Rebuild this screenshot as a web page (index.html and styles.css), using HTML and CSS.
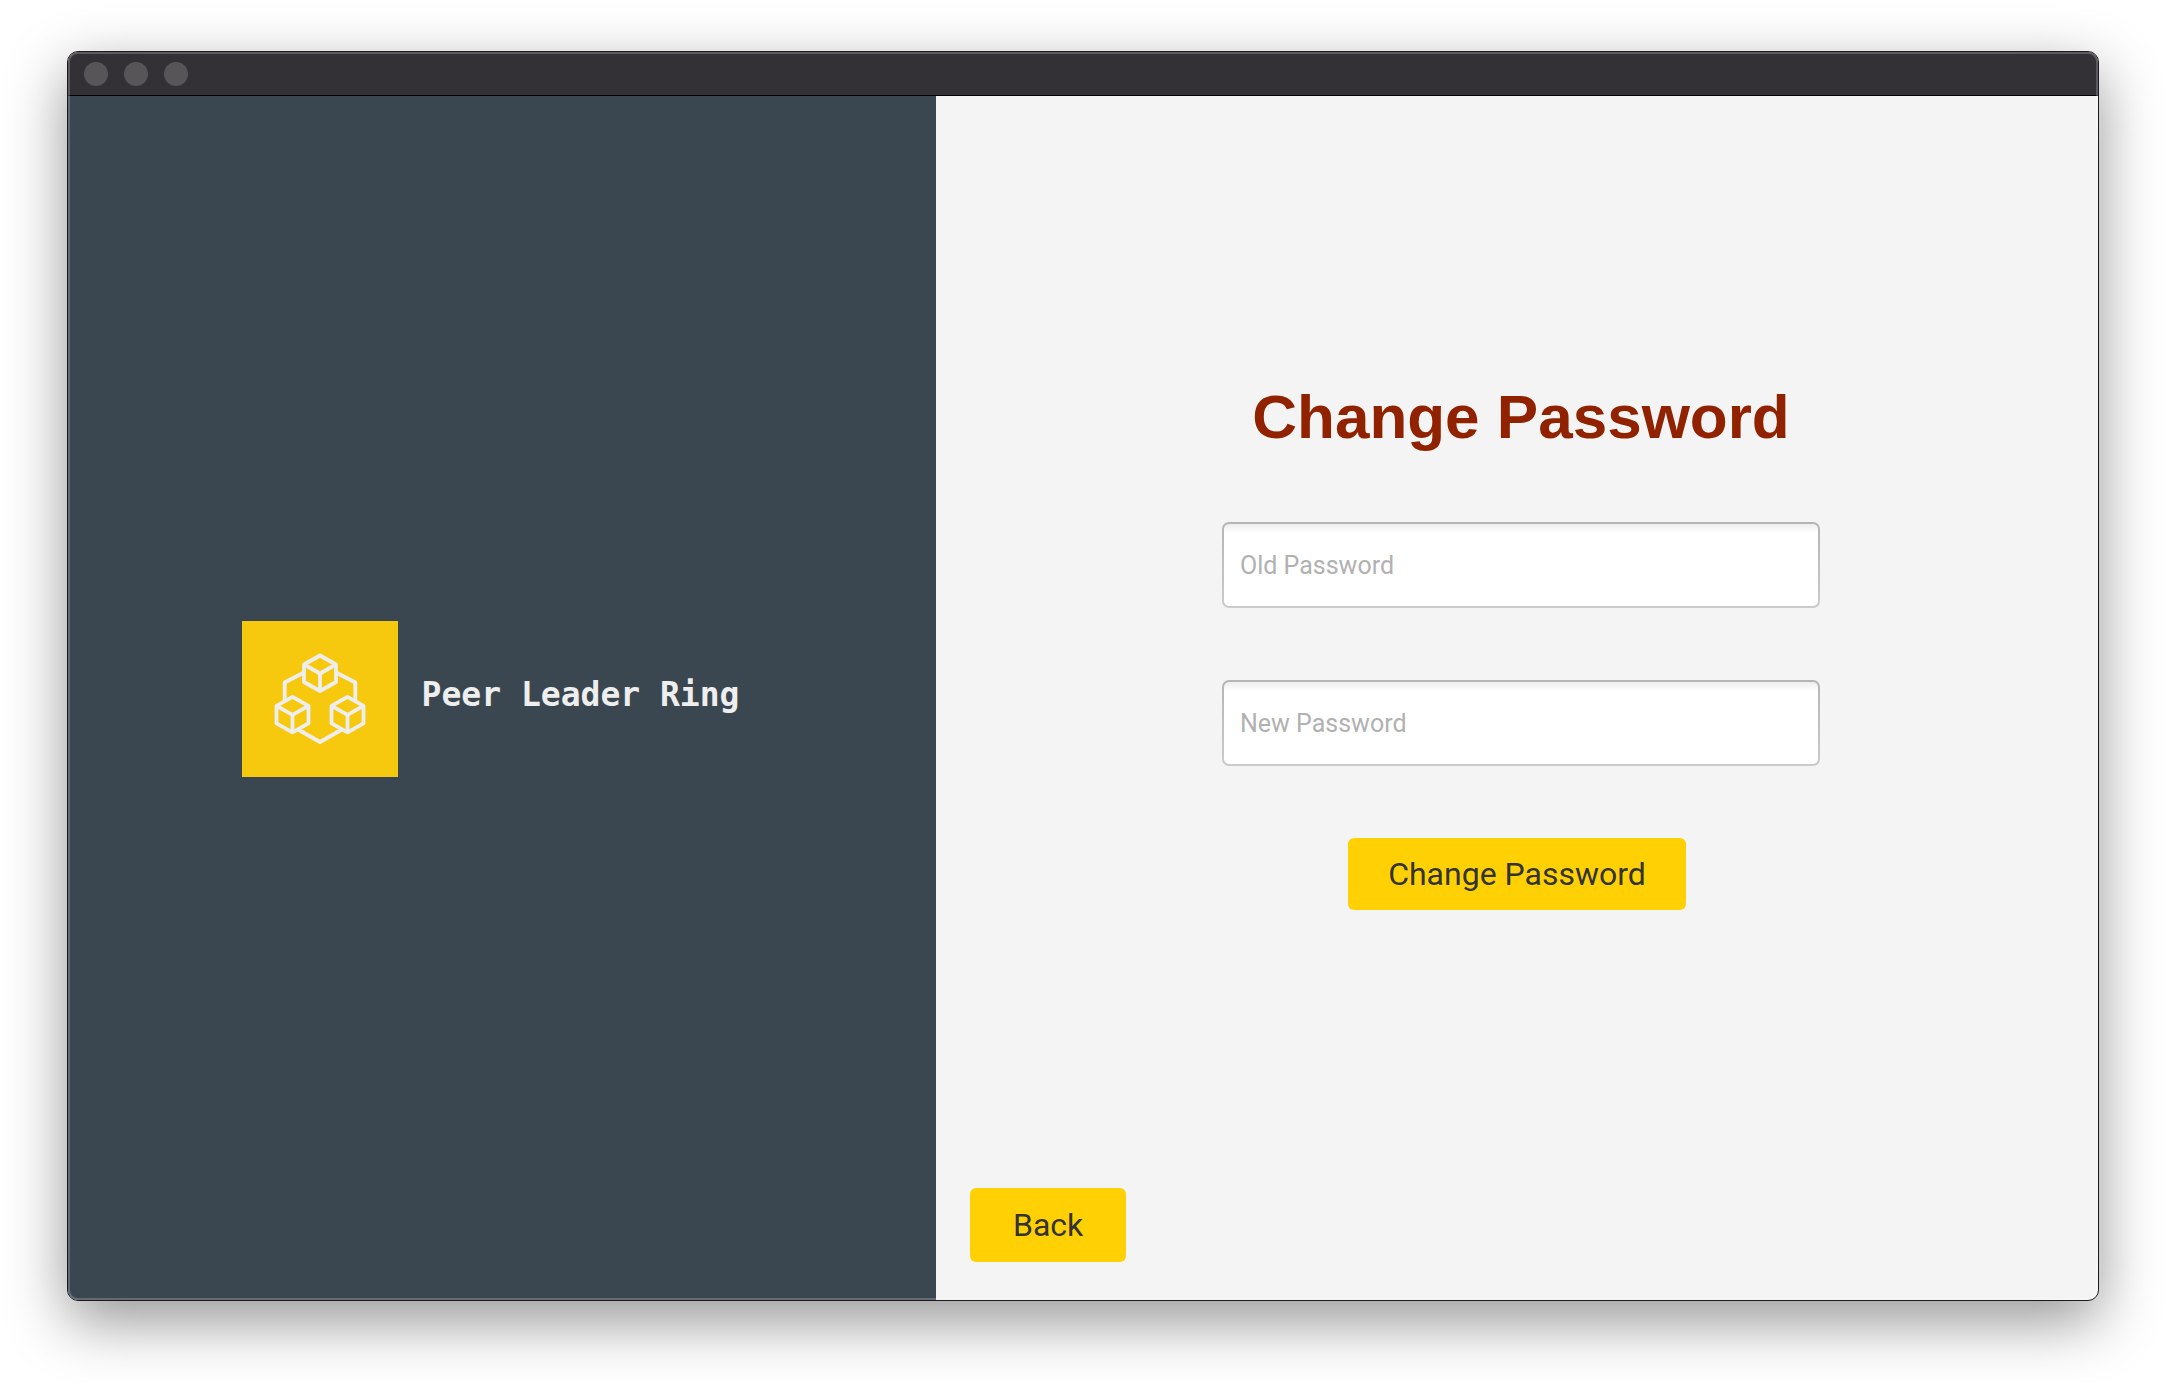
FILE: index.html
```html
<!DOCTYPE html>
<html lang="en">
<head>
  <meta charset="utf-8">
  <meta name="viewport" content="width=device-width, initial-scale=1">
  <title>Peer Leader Ring</title>
  <link rel="stylesheet" href="styles.css">
</head>
<body>
  <div class="window">
    <header class="titlebar">
      <span class="dot"></span>
      <span class="dot"></span>
      <span class="dot"></span>
    </header>
    <div class="content">
      <aside class="brand">
        <svg class="logo" viewBox="0 0 156 156" aria-hidden="true">
          <defs>
            <g id="cube">
              <path d="M0 -17.5 16 -8.5V9L0 18 -16 9V-8.5Z"/>
              <path d="M-16 -8.5 0 0.5 16 -8.5M0 0.5V18"/>
            </g>
          </defs>
          <g fill="none" stroke="#eee" stroke-width="3.8" stroke-linejoin="round">
            <path d="M61 52 42.7 61.5V80"/>
            <path d="M95 52 113.3 61.5V80"/>
            <path d="M56 108.5 78 121 100 108.5"/>
            <use href="#cube" x="78" y="52"/>
            <use href="#cube" x="50.5" y="93.3"/>
            <use href="#cube" x="105.5" y="93.3"/>
          </g>
        </svg>
        <span class="brand-name">Peer Leader Ring</span>
      </aside>
      <main class="panel">
        <form class="form">
          <div class="fields">
            <h1 class="title">Change Password</h1>
            <input class="field" type="password" placeholder="Old Password" aria-label="Old Password">
            <input class="field" type="password" placeholder="New Password" aria-label="New Password">
          </div>
          <button class="button" type="submit">Change Password</button>
        </form>
        <footer class="actions">
          <button class="button button-back" type="button">Back</button>
        </footer>
      </main>
    </div>
  </div>
</body>
</html>
```
FILE: styles.css
```css
* {
  box-sizing: border-box;
}

body {
  display: flex;
  min-height: 100vh;
  margin: 0;
  padding: 51px 67px 83px;
  background: #fff;
  font-family: Roboto, "Liberation Sans", sans-serif;
}

.window {
  position: relative;
  display: flex;
  flex: 1;
  flex-direction: column;
  overflow: hidden;
  border: 1px solid #1c1a1d;
  border-radius: 11px;
  background: #f4f4f4;
  box-shadow: 0 20px 60px rgba(0, 0, 0, 0.42);
}

/* light rim inside the window frame */
.window::after {
  position: absolute;
  inset: 0;
  border-radius: 10px;
  box-shadow: inset 0 0 0 2px rgba(255, 255, 255, 0.2);
  content: "";
  pointer-events: none;
}

.titlebar {
  display: flex;
  align-items: center;
  gap: 16px;
  height: 44px;
  padding: 0 16px;
  border-bottom: 1px solid #000;
  background: #343136;
}

.dot {
  width: 24px;
  height: 24px;
  border-radius: 50%;
  background: #575558;
}

.content {
  display: grid;
  flex: 1;
  grid-template-columns: 868fr 1162fr;
}

.brand {
  display: flex;
  align-items: center;
  gap: 24px;
  padding-top: 2px;
  padding-left: 20%;
  background: #3b4750;
}

.logo {
  flex: none;
  width: 156px;
  height: 156px;
  background: #f6c90e;
}

.brand-name {
  padding-bottom: 8px;
  color: #eee;
  font: bold 33px/40px "DejaVu Sans Mono", monospace;
  white-space: nowrap;
}

.panel {
  display: flex;
  flex-direction: column;
  padding: 10px 34px 38px;
}

.form {
  display: flex;
  flex: 1;
  flex-direction: column;
  align-items: center;
  justify-content: center;
  gap: 72px;
}

.fields {
  display: flex;
  flex-direction: column;
  gap: 72px;
  width: 100%;
  max-width: 598px;
  margin-left: 8px;
}

.title {
  margin: 0;
  color: #912200;
  font: bold 62px/66px "Liberation Sans", Arial, sans-serif;
  text-align: center;
}

.field {
  width: 100%;
  height: 86px;
  padding: 0 16px;
  border: 2px solid transparent;
  border-radius: 7px;
  background:
    linear-gradient(#ededed, #fff 9px) padding-box,
    linear-gradient(#b5b5b5, #cbcbcb) border-box;
  color: #333;
  font: 25px/32px Roboto, sans-serif;
}

.field::placeholder {
  color: #b1b1b1;
  opacity: 1;
}

.button {
  padding: 16px 40px;
  border: 0;
  border-radius: 6px;
  background: #ffd105;
  color: #333;
  font: 32px/40px Roboto, sans-serif;
}

.button-back {
  padding: 17px 43px;
}
```
